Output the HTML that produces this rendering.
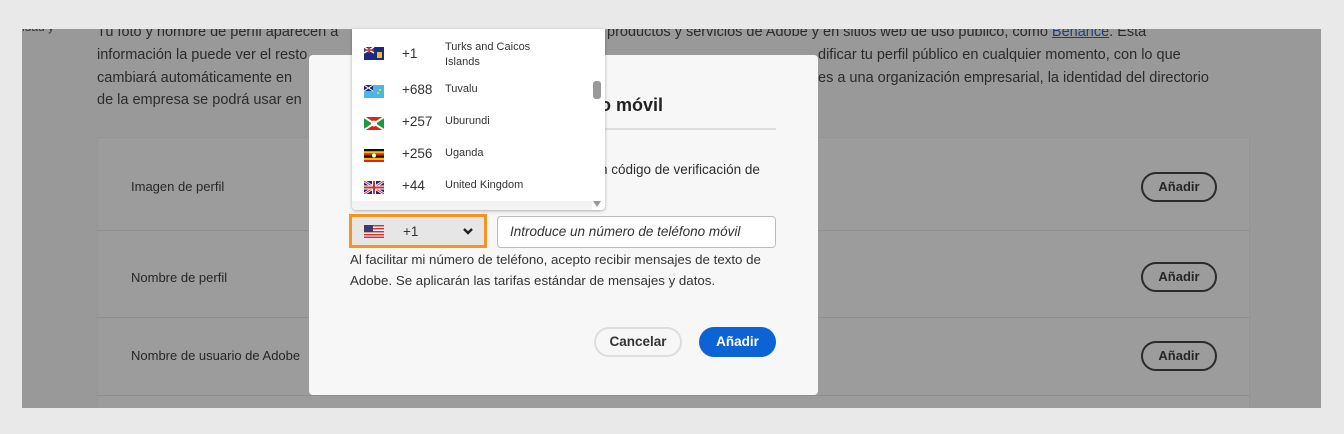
<!DOCTYPE html>
<html><head><meta charset="utf-8"><style>
*{margin:0;padding:0;box-sizing:border-box}
body{width:1344px;height:434px;background:#e9e9e9;font-family:"Liberation Sans",sans-serif;position:relative;overflow:hidden;color:#2a2a2a}
.a{position:absolute}
.dim{left:22px;top:29px;width:1299px;height:379px;background:#999;overflow:hidden}
.p{left:75px;font-size:14.5px;color:#2b2b2b;white-space:nowrap;line-height:22px}
.card{left:75px;top:108px;width:1153px;height:271px;background:#9c9c9c;border:1px solid #959595;border-bottom:none}
.sep{left:75px;width:1153px;height:1px;background:#8f8f8f}
.lbl{left:109px;font-size:13px;color:#262626}
.btn{width:76px;height:30px;border:2px solid #2a2a2a;border-radius:15px;font-size:13px;font-weight:bold;text-align:center;line-height:26px;color:#262626}
.modal{left:309px;top:55px;width:509px;height:340px;background:#f7f7f7;border-radius:4px}
.dd{left:352px;top:29px;width:253px;height:181px;background:#fff;border-radius:0 0 4px 4px;box-shadow:0 1px 3px rgba(0,0,0,.3);overflow:hidden}
.row{position:absolute;left:0;width:240px;font-size:13.5px;color:#333}
.flag{position:absolute;left:12px;width:20px;height:13px}
.code{position:absolute;left:50px}
.nm{position:absolute;left:93px;font-size:11px}
</style></head><body>
<div class="a dim">
<div class="a" style="left:0;top:-9px;font-size:12px;color:#333">idad y</div>
<div class="a p" style="top:-8px">Tu foto y nombre de perfil aparecen a</div>
<div class="a p" style="left:585px;top:-8px">productos y servicios de Adobe y en sitios web de uso público, como <span style="color:#1f3f78;text-decoration:underline">Behance</span>. Esta</div>
<div class="a p" style="top:15px">información la puede ver el resto</div>
<div class="a p" style="left:796px;top:15px">dificar tu perfil público en cualquier momento, con lo que</div>
<div class="a p" style="top:38px">cambiará automáticamente en</div>
<div class="a p" style="left:796px;top:38px">es a una organización empresarial, la identidad del directorio</div>
<div class="a p" style="top:60px">de la empresa se podrá usar en</div>
<div class="a card"></div>
<div class="a sep" style="top:201px"></div>
<div class="a sep" style="top:288px"></div>
<div class="a sep" style="top:366px"></div>
<div class="a lbl" style="top:150px">Imagen de perfil</div>
<div class="a lbl" style="top:241px">Nombre de perfil</div>
<div class="a lbl" style="top:319px">Nombre de usuario de Adobe</div>
<div class="a btn" style="left:1119px;top:143px">Añadir</div>
<div class="a btn" style="left:1119px;top:233px">Añadir</div>
<div class="a btn" style="left:1119px;top:312px">Añadir</div>
</div>

<div class="a modal"></div>
<div class="a" style="left:600px;top:95px;font-size:18px;font-weight:bold;color:#222">o móvil</div>
<div class="a" style="left:352px;top:128px;width:424px;height:2px;background:#ddd"></div>
<div class="a" style="left:600px;top:162px;font-size:13.5px;color:#2c2c2c">n código de verificación de</div>
<div class="a" style="left:349px;top:214px;width:138px;height:34px;border:3px solid #f7931e;background:#e6e6e6"></div>
<svg class="a" style="left:364px;top:225px" width="20" height="13"><rect width="20" height="13" fill="#fff"/><g fill="#c33"><rect y="0" width="20" height="1.5"/><rect y="3" width="20" height="1.5"/><rect y="6" width="20" height="1.5"/><rect y="9" width="20" height="1.5"/><rect y="11.5" width="20" height="1.5"/></g><rect width="9" height="7" fill="#3c3b6e"/></svg>
<div class="a" style="left:403px;top:224px;font-size:13.5px;color:#333">+1</div>
<svg class="a" style="left:462px;top:226px" width="12" height="10"><path d="M2 3l4 4 4-4" stroke="#222" stroke-width="2.4" fill="none"/></svg>
<div class="a" style="left:497px;top:216px;width:279px;height:32px;border:1px solid #bbb;border-radius:4px;background:#fff;font-size:13.5px;font-style:italic;color:#333;padding:7px 12px">Introduce un número de teléfono móvil</div>
<div class="a" style="left:350px;top:249px;font-size:13.3px;line-height:21px;color:#333">Al facilitar mi número de teléfono, acepto recibir mensajes de texto de<br>Adobe. Se aplicarán las tarifas estándar de mensajes y datos.</div>
<div class="a" style="left:594px;top:327px;width:88px;height:30px;border:2px solid #ddd;border-radius:15px;font-size:13.5px;font-weight:bold;text-align:center;line-height:26px;color:#333">Cancelar</div>
<div class="a" style="left:699px;top:327px;width:77px;height:30px;background:#0b63d4;border-radius:15px;font-size:13.5px;font-weight:bold;text-align:center;line-height:30px;color:#fff">Añadir</div>

<div class="a dd">
 <div class="row" style="top:10px;height:32px"><svg class="flag" style="top:8px" width="20" height="13"><rect width="20" height="13" fill="#1a2a80"/><path d="M0 0l10 6M10 0L0 6" stroke="#fff" stroke-width="1.5"/><path d="M5 0v6M0 3h10" stroke="#c33" stroke-width="1.5"/><rect x="13" y="5" width="5" height="6" fill="#e6c020"/></svg><span class="code" style="top:7px">+1</span><span class="nm" style="top:1px;line-height:15px">Turks and Caicos<br>Islands</span></div>
 <div class="row" style="top:53px;height:20px"><svg class="flag" style="top:3px" width="20" height="13"><rect width="20" height="13" fill="#4cb6e6"/><rect width="9" height="6" fill="#1a2a80"/><path d="M0 0l9 6M9 0L0 6" stroke="#fff" stroke-width="1"/><circle cx="14" cy="8" r="1" fill="#ee0"/><circle cx="16" cy="5" r="1" fill="#ee0"/></svg><span class="code">+688</span><span class="nm" style="top:1px">Tuvalu</span></div>
 <div class="row" style="top:85px;height:20px"><svg class="flag" style="top:3px" width="20" height="13"><rect width="20" height="13" fill="#d22"/><path d="M0 0L10 6.5 0 13zM20 0L10 6.5 20 13z" fill="#1a9a3a"/><path d="M0 0l20 13M20 0L0 13" stroke="#fff" stroke-width="2"/><circle cx="10" cy="6.5" r="3" fill="#fff"/></svg><span class="code">+257</span><span class="nm" style="top:1px">Uburundi</span></div>
 <div class="row" style="top:117px;height:20px"><svg class="flag" style="top:3px" width="20" height="13"><rect width="20" height="13" fill="#111"/><rect y="2.2" width="20" height="2.2" fill="#f0c000"/><rect y="4.4" width="20" height="2.2" fill="#d22"/><rect y="8.8" width="20" height="2.2" fill="#f0c000"/><rect y="11" width="20" height="2" fill="#d22"/><circle cx="10" cy="6.5" r="2" fill="#fff"/></svg><span class="code">+256</span><span class="nm" style="top:1px">Uganda</span></div>
 <div class="row" style="top:149px;height:20px"><svg class="flag" style="top:3px" width="20" height="13"><rect width="20" height="13" fill="#1a2a80"/><path d="M0 0l20 13M20 0L0 13" stroke="#fff" stroke-width="2.6"/><path d="M0 0l20 13M20 0L0 13" stroke="#c33" stroke-width="1"/><path d="M10 0v13M0 6.5h20" stroke="#fff" stroke-width="4"/><path d="M10 0v13M0 6.5h20" stroke="#c33" stroke-width="2"/></svg><span class="code">+44</span><span class="nm" style="top:1px">United Kingdom</span></div>
 <div style="position:absolute;left:0;top:172px;width:240px;height:9px;background:#f3f3f3"></div>
 <div style="position:absolute;left:241px;top:52px;width:8px;height:18px;background:#999;border-radius:3px"></div>
 <svg style="position:absolute;left:240px;top:171px" width="10" height="8"><path d="M1 1h8L5 7z" fill="#999"/></svg>
</div>
</body></html>
